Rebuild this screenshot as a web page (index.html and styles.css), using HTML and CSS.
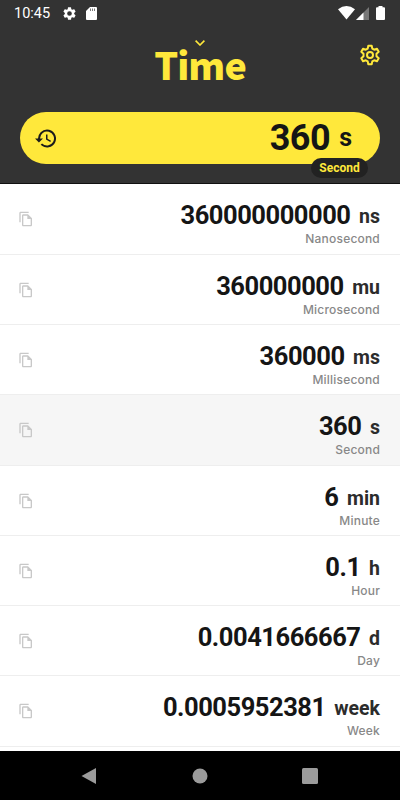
FILE: index.html
```html
<!DOCTYPE html>
<html lang="en">
<head>
<meta charset="utf-8">
<title>Time</title>
<link rel="stylesheet" href="styles.css">
</head>
<body>
<svg class="defs" width="0" height="0"><symbol id="copy" viewBox="0 0 24 24"><path fill="currentColor" d="M16 1H4c-1.100 0-2 .9-2 2v14h2V3h12V1zm-1 4 6 6v10c0 1.100-.9 2-2 2H7.990C6.890 23 6 22.100 6 21l.01-14c0-1.100.89-2 1.990-2h7zM8 7v14h11v-9h-5V7H8z"/></symbol></svg>
<header class="header">
  <div class="status">
    <span class="clock">10:45</span>
    <svg class="st-gear" viewBox="2 2 20 20"><path fill="#fff" fill-rule="evenodd" d="M19.140 12.940c.04-.3.06-.61.06-.94s-.02-.64-.07-.94l2.030-1.580a.5.5 0 0 0 .12-.61l-1.920-3.320a.49.49 0 0 0-.59-.22l-2.390.96a7 7 0 0 0-1.620-.94l-.36-2.540a.48.48 0 0 0-.48-.41h-3.840a.47.47 0 0 0-.47.41l-.36 2.540c-.59.24-1.130.57-1.620.94l-2.390-.96a.48.48 0 0 0-.59.22L2.740 8.870a.47.47 0 0 0 .12.61l2.030 1.580a6 6 0 0 0 0 1.880l-2.030 1.580a.5.5 0 0 0-.12.61l1.920 3.320c.12.22.37.29.59.22l2.390-.96c.5.38 1.030.7 1.620.94l.36 2.540c.05.24.24.41.48.41h3.840c.24 0 .44-.17.47-.41l.36-2.540a7 7 0 0 0 1.620-.94l2.390.96c.22.08.47 0 .59-.22l1.920-3.320a.47.47 0 0 0-.12-.61zM12 15.600a3.600 3.600 0 1 1 0-7.200 3.600 3.600 0 0 1 0 7.200z"/></svg>
    <svg class="st-sd" viewBox="0 0 11 13"><path fill="#fff" d="M4 0h6q1 0 1 1v11q0 1-1 1H1q-1 0-1-1V4z"/><path stroke="#555" stroke-width=".8" d="M4.500 1.500v2.500M6.500 1.500v2.500M8.500 1.500v2.500"/></svg>
    <span class="grow"></span>
    <svg class="st-wifi" viewBox="0 0 17 14"><path fill="#fff" d="M0 3.200Q8.500-3 17 3.200L8.500 13.500z"/></svg>
    <svg class="st-cell" viewBox="0 0 13 13"><path fill="#777" d="M13 0v13H0z"/><path fill="#fff" d="M7.500 5.500V13H0z"/></svg>
    <svg class="st-bat" viewBox="0 0 9 14"><path fill="#fff" d="M2.500 0h4v1.200H8q1 0 1 1V13q0 1-1 1H1q-1 0-1-1V2.200q0-1 1-1h1.500z"/></svg>
  </div>
  <div class="titlebar">
    <svg class="chev" viewBox="0 0 10 6"><path fill="none" stroke="#ffe83b" stroke-width="1.600" d="M.6.6 5 5 9.400.6"/></svg>
    <h1 class="title">Time</h1>
    <svg class="gear" viewBox="0 0 20 22"><g fill="none" stroke="#ffe83b" stroke-width="2" stroke-linejoin="round"><path d="M8.300 1.700h3.400l.6 2.900 1.900 1.100 2.800-.9 1.700 2.900-2.200 2v2.600l2.200 2-1.700 2.900-2.800-.9-1.900 1.100-.6 2.900H8.300l-.6-2.900-1.900-1.100-2.800.9-1.700-2.900 2.200-2V9.700l-2.200-2L3 4.800l2.800.9 1.900-1.100z"/><circle cx="10" cy="11" r="3"/></g></svg>
  </div>
  <div class="pill">
    <svg class="history" viewBox="1 3 21 18"><path fill="#1c1c1c" d="M13 3a9 9 0 0 0-9 9H1l3.890 3.890.07.14L9 12H6a7 7 0 1 1 2.060 4.940l-1.420 1.420A9 9 0 1 0 13 3zm-1 5v5l4.280 2.540.72-1.210-3.500-2.080V8z"/></svg>
    <span class="amount">360</span><span class="sym">s</span>
    <span class="tag">Second</span>
  </div>
</header>
<main class="list">
  <div class="row"><svg class="copy"><use href="#copy"/></svg><div class="val"><p class="num"><b>360000000000</b><i>ns</i></p><p class="name">Nanosecond</p></div></div>
  <div class="row"><svg class="copy"><use href="#copy"/></svg><div class="val"><p class="num"><b>360000000</b><i>mu</i></p><p class="name">Microsecond</p></div></div>
  <div class="row"><svg class="copy"><use href="#copy"/></svg><div class="val"><p class="num"><b>360000</b><i>ms</i></p><p class="name">Millisecond</p></div></div>
  <div class="row active"><svg class="copy"><use href="#copy"/></svg><div class="val"><p class="num"><b>360</b><i>s</i></p><p class="name">Second</p></div></div>
  <div class="row"><svg class="copy"><use href="#copy"/></svg><div class="val"><p class="num"><b>6</b><i>min</i></p><p class="name">Minute</p></div></div>
  <div class="row"><svg class="copy"><use href="#copy"/></svg><div class="val"><p class="num"><b>0.1</b><i>h</i></p><p class="name">Hour</p></div></div>
  <div class="row"><svg class="copy"><use href="#copy"/></svg><div class="val"><p class="num"><b>0.0041666667</b><i>d</i></p><p class="name">Day</p></div></div>
  <div class="row"><svg class="copy"><use href="#copy"/></svg><div class="val"><p class="num"><b>0.0005952381</b><i>week</i></p><p class="name">Week</p></div></div>
</main>
<nav class="nav">
  <svg viewBox="0 0 16 18"><path fill="#9b9b9b" d="M14 1v16L-.5 9z"/></svg>
  <svg viewBox="0 0 16 18"><circle cx="8" cy="9" r="7.500" fill="#9b9b9b"/></svg>
  <svg viewBox="0 0 16 18"><rect y="1" width="16" height="16" rx="1.500" fill="#9b9b9b"/></svg>
</nav>
</body>
</html>
```
FILE: styles.css
```css
* { box-sizing: border-box; margin: 0; padding: 0; }
body { width: 400px; height: 800px; overflow: hidden; display: flex; flex-direction: column; background: #fff; color: #151515; font-family: Roboto, sans-serif; }
svg { display: block; flex: none; }
.defs { position: absolute; }
.header { height: 184px; flex: none; background: #333; border-bottom: 1px solid #111; }
.status { height: 26px; display: flex; align-items: center; padding: 0 15px 0 14px; }
.clock { color: #fff; font-size: 14.500px; width: 49px; }
.st-gear { width: 13px; height: 13px; margin-right: 10px; }
.st-sd { width: 11px; height: 13px; }
.grow { flex: 1; }
.st-wifi { width: 17px; height: 14px; }
.st-cell { width: 13px; height: 13px; margin: 0 7px 0 1px; }
.st-bat { width: 9px; height: 14px; }
.titlebar { position: relative; height: 86px; padding-top: 14px; display: flex; flex-direction: column; align-items: center; }
.chev { width: 10px; height: 6px; }
.title { color: #ffe83b; font: 900 37.500px/36px "Noto Sans CJK SC", sans-serif; letter-spacing: -.9px; }
.gear { position: absolute; right: 20px; top: 18px; width: 20px; height: 22px; }
.pill { position: relative; height: 52px; margin: 0 20px; padding: 0 28px 0 15px; border-radius: 26px; background: #ffe83b; display: flex; align-items: center; }
.history { width: 21px; height: 19px; margin-right: auto; }
.amount { font-size: 36px; font-weight: 700; line-height: 52px; letter-spacing: -.5px; }
.sym { font-size: 25px; font-weight: 700; line-height: 51px; height: 52px; margin-left: 9px; }
.tag { position: absolute; right: 12px; top: 46px; width: 57px; height: 20px; border-radius: 10px; background: #222; color: #ffe83b; text-align: center; font-size: 12px; font-weight: 700; line-height: 20px; }
.list { height: 567px; flex: none; padding-top: .4px; }
.row { height: 70.300px; border-bottom: 1px solid #eee; padding: 0 20px; display: flex; justify-content: space-between; }
.active { background: #f6f6f6; }
.copy { width: 16px; height: 16px; margin-top: 27px; margin-left: -2px; color: #c8c8c8; }
.val { text-align: right; padding-top: 17px; }
.num { display: flex; justify-content: flex-end; line-height: 29px; height: 30px; }
.num b { font-size: 25.500px; letter-spacing: -.46px; }
.num i { font-style: normal; font-weight: 700; font-size: 19.500px; line-height: 31px; color: #2c2c2c; margin-left: 8.500px; }
.name { font: 500 12px/16px Inter, sans-serif; color: #888; letter-spacing: .2px; }
.nav { height: 49px; background: #000; display: flex; justify-content: center; align-items: center; gap: 94px; }
.nav svg { width: 16px; height: 18px; overflow: visible; }
```
